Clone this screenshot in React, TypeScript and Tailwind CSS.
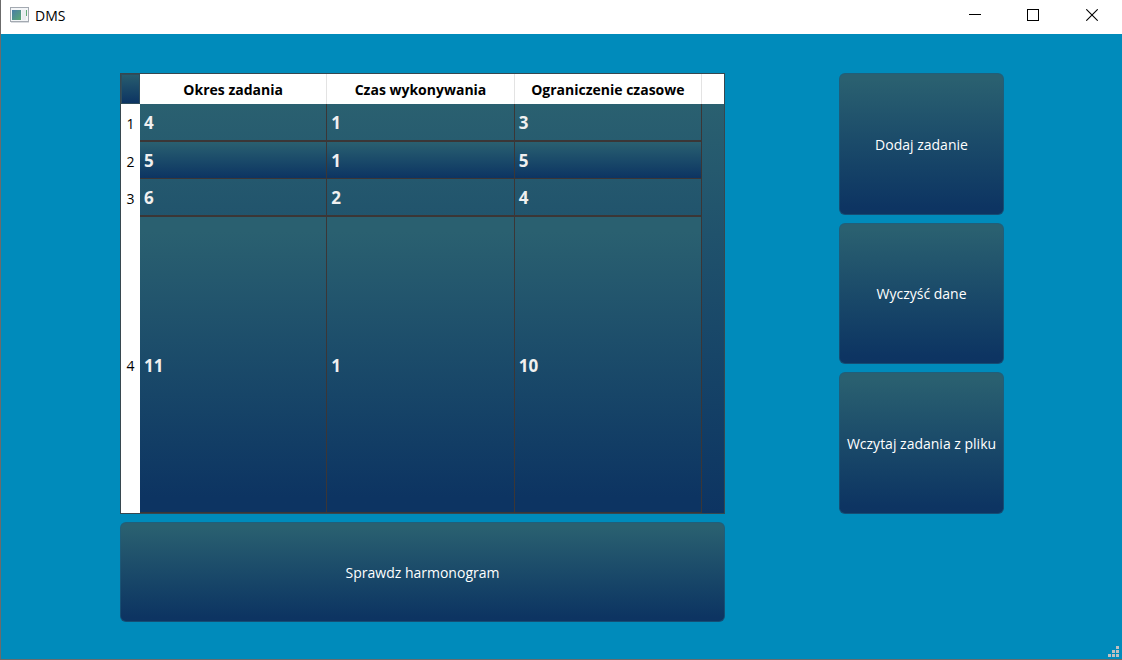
import React from "react";

const columns = ["Okres zadania", "Czas wykonywania", "Ograniczenie czasowe"];

const tasks = [
  { values: [4, 1, 3], row: "h-[38px]", fill: "" },
  { values: [5, 1, 5], row: "h-[37px]", fill: "bg-linear-to-b from-[#2a6070] to-[#0d3462]" },
  { values: [6, 2, 4], row: "h-[38px]", fill: "" },
  { values: [11, 1, 10], row: "", fill: "bg-linear-to-b from-[#2a6070] from-5% to-[#0d3462] to-95%" },
];

function ActionButton({ children }: { children: React.ReactNode }) {
  return (
    <button
      type="button"
      className="h-full w-full rounded-md border border-[#1b5f80]/60 bg-linear-to-b from-[#2a6070] from-5% to-[#0d3462] to-95% bg-origin-border pt-0.5 text-sm whitespace-nowrap text-white"
    >
      {children}
    </button>
  );
}

function TitleBar() {
  return (
    <header className="flex h-[34px] shrink-0 items-center justify-between bg-white">
      <div className="flex items-center gap-1.5 pb-1 pl-[9px]">
        <svg width="19" height="16" viewBox="0 0 19 16" aria-hidden="true">
          <defs>
            <linearGradient id="pane" x1="0" y1="0" x2="1" y2="1">
              <stop offset="0" stopColor="#4a7da6" />
              <stop offset="1" stopColor="#5aa873" />
            </linearGradient>
          </defs>
          <rect x="0.5" y="0.5" width="18" height="14" fill="#f4f6f8" stroke="#a3a9b1" />
          <rect x="2" y="3" width="9" height="10" fill="url(#pane)" />
          <rect x="12" y="3" width="4" height="10" fill="#e9edf0" />
          <rect x="16" y="3" width="1" height="6" fill="#62ab78" />
          <path d="M1 15.5h18" stroke="#d9dce0" />
        </svg>
        <h1 className="pt-0.5 text-sm text-black">DMS</h1>
      </div>
      <div className="flex h-full items-center pb-1">
        <button type="button" aria-label="Minimalizuj" className="flex w-[58px] justify-center">
          <svg width="12" height="12" viewBox="0 0 12 12" shapeRendering="crispEdges">
            <path d="M0 5.5h12" stroke="#000" />
          </svg>
        </button>
        <button type="button" aria-label="Maksymalizuj" className="flex w-[58px] justify-center">
          <svg width="12" height="12" viewBox="0 0 12 12" shapeRendering="crispEdges">
            <rect x="0.5" y="0.5" width="11" height="11" fill="none" stroke="#000" />
          </svg>
        </button>
        <button type="button" aria-label="Zamknij" className="flex w-[60px] justify-center">
          <svg width="12" height="12" viewBox="0 0 12 12">
            <path d="M0.3 0.3l11.4 11.4M11.7 0.3L0.3 11.7" stroke="#000" strokeWidth="1.1" />
          </svg>
        </button>
      </div>
    </header>
  );
}

function TaskTable() {
  return (
    <div className="h-full border border-[#37474f]">
      <table className="h-full w-full table-fixed border-separate border-spacing-0 bg-linear-to-b from-[#2a6070] from-[30px] to-[#0d3462]">
        <colgroup>
          <col className="w-[19px]" />
          <col />
          <col />
          <col />
          <col className="w-[22px]" />
        </colgroup>
        <thead>
          <tr className="h-[30px] text-sm text-black">
            <td className="border border-[#2f4d5c] bg-linear-to-b from-[#285c6e] to-[#0d3462] p-0" />
            {columns.map((name) => (
              <th key={name} scope="col" className="border-r border-[#e3e3e3] bg-white px-0 pt-0.5 pb-0 font-bold">
                {name}
              </th>
            ))}
            <td className="bg-white p-0" />
          </tr>
        </thead>
        <tbody>
          {tasks.map((task, i) => (
            <tr key={i} className={task.row}>
              <th scope="row" className="bg-white px-0 pt-0.5 pb-0 text-center text-sm font-normal text-black">
                {i + 1}
              </th>
              {task.values.map((value, j) => (
                <td
                  key={j}
                  className={`border-r border-b border-[#3b3636] px-1 pt-0.5 pb-0 text-[17px] leading-6 font-bold text-[#f0f0f0] ${i % 2 === 0 ? "border-b-2" : ""} ${task.fill}`}
                >
                  {value}
                </td>
              ))}
              <td className="p-0" />
            </tr>
          ))}
        </tbody>
      </table>
    </div>
  );
}

function SizeGrip() {
  return (
    <svg
      className="absolute right-[3px] bottom-[3px]"
      width="11"
      height="11"
      viewBox="0 0 11 11"
      fill="#c0c0c0"
      shapeRendering="crispEdges"
      aria-hidden="true"
    >
      <path d="M8 0h3v3H8zM4 4h3v3H4zM8 4h3v3H8zM0 8h3v3H0zM4 8h3v3H4zM8 8h3v3H8z" />
    </svg>
  );
}

export default function App() {
  return (
    <div className="relative flex h-screen min-h-[480px] flex-col border-l border-[#6b6b6b] bg-[#008bbb] font-['Open_Sans','Noto_Sans',sans-serif]">
      <TitleBar />
      <main className="grid min-h-0 flex-1 grid-cols-[119fr_605fr_114fr_165fr_118fr] grid-rows-[minmax(0,1fr)_100px] gap-y-2 border-b border-[#6b6b6b] pt-[39px] pb-[37px]">
        <div className="col-start-2 row-start-1">
          <TaskTable />
        </div>
        <div className="col-start-4 row-start-1 grid grid-rows-3 gap-2">
          <ActionButton>Dodaj zadanie</ActionButton>
          <ActionButton>Wyczyść dane</ActionButton>
          <ActionButton>Wczytaj zadania z pliku</ActionButton>
        </div>
        <div className="col-start-2 row-start-2">
          <ActionButton>Sprawdz harmonogram</ActionButton>
        </div>
      </main>
      <SizeGrip />
    </div>
  );
}
